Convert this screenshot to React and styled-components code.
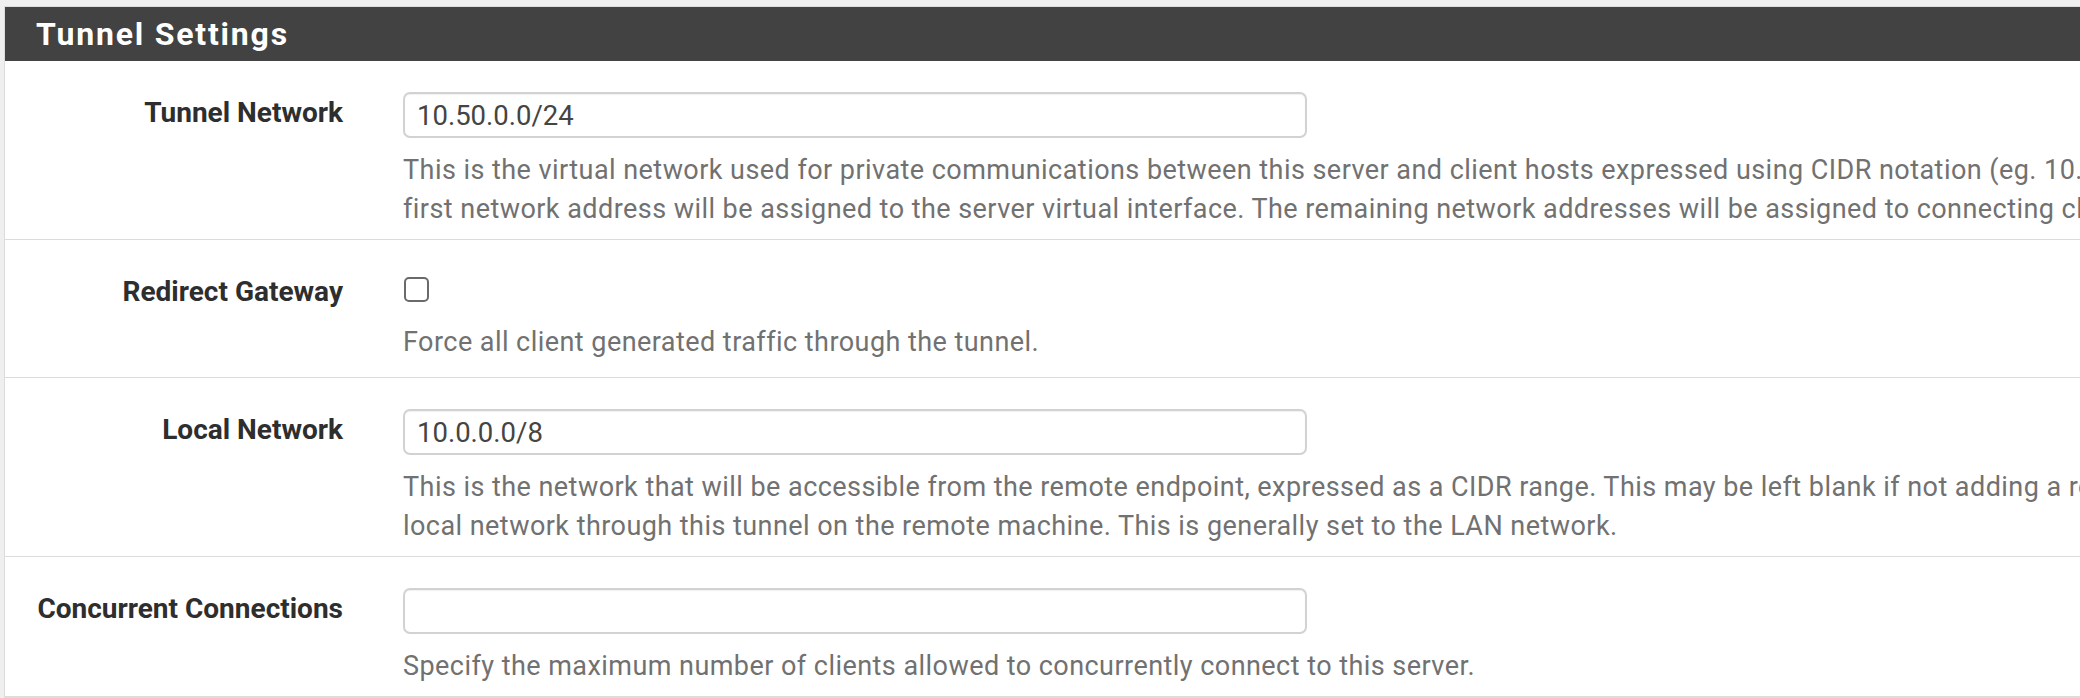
import React from "react";
import styled, { createGlobalStyle } from "styled-components";

const Global = createGlobalStyle`
  html, body {
    margin: 0;
    padding: 0;
    background: #efefef;
    overflow: hidden;
  }
  body {
    font-family: Roboto, "Liberation Sans", Arial, sans-serif;
  }
`;

const Page = styled.div`
  padding: 6px 0 0 4px;
  width: 2600px;
`;

const Panel = styled.section`
  background: #fff;
  border: 1px solid #dcdcdc;
  border-right: none;
`;

const Header = styled.h2`
  margin: 0;
  height: 54px;
  line-height: 54px;
  padding-left: 31px;
  background: #424242;
  color: #fff;
  font-size: 32px;
  font-weight: 700;
  letter-spacing: 1.8px;
`;

const Row = styled.div`
  display: flex;
  align-items: flex-start;
  padding: 31px 0 10px;
  border-bottom: 1px solid #dcdcdc;
`;

const Label = styled.label`
  flex: 0 0 338px;
  box-sizing: border-box;
  text-align: right;
  font-size: 28px;
  font-weight: 700;
  line-height: 42px;
  color: #2e2e2e;
  white-space: nowrap;
`;

const Content = styled.div`
  padding-left: 60px;
  display: flex;
  flex-direction: column;
`;

const Input = styled.input`
  box-sizing: border-box;
  width: 904px;
  height: 46px;
  padding: 0 12px;
  border: 2px solid #d2d2d2;
  border-radius: 7px;
  background: #fff;
  box-shadow: inset 0 1px 1px rgba(0, 0, 0, 0.06);
  font-family: Roboto, "Liberation Sans", Arial, sans-serif;
  font-size: 27.5px;
  letter-spacing: 0;
  color: #444;
  outline: none;
`;

const CheckWrap = styled.div`
  height: 39px;
  display: flex;
  align-items: flex-start;
  padding-top: 6px;
  box-sizing: border-box;
`;

const Check = styled.input`
  appearance: none;
  margin: 0 0 0 1px;
  width: 25px;
  height: 25px;
  box-sizing: border-box;
  border: 2px solid #6a6a6a;
  border-radius: 5px;
  background: #fff;
`;

const Help = styled.div`
  margin-top: 13px;
  margin-bottom: ${(p) => (p.$extra ? "5px" : "0")};
  font-size: 27px;
  letter-spacing: 0.45px;
  line-height: 39px;
  color: #717171;
`;

const Line = styled.span`
  display: block;
  white-space: nowrap;
`;

const rows = [
  {
    label: "Tunnel Network",
    value: "10.50.0.0/24",
    help: [
      "This is the virtual network used for private communications between this server and client hosts expressed using CIDR notation (eg. 10.0.8.0/24). The",
      "first network address will be assigned to the server virtual interface. The remaining network addresses will be assigned to connecting clients.",
    ],
  },
  {
    label: "Redirect Gateway",
    checkbox: true,
    help: ["Force all client generated traffic through the tunnel."],
  },
  {
    label: "Local Network",
    value: "10.0.0.0/8",
    help: [
      "This is the network that will be accessible from the remote endpoint, expressed as a CIDR range. This may be left blank if not adding a route to the",
      "local network through this tunnel on the remote machine. This is generally set to the LAN network.",
    ],
  },
  {
    label: "Concurrent Connections",
    value: "",
    help: ["Specify the maximum number of clients allowed to concurrently connect to this server."],
  },
];

export default function App() {
  return (
    <Page>
      <Global />
      <Panel>
        <Header>Tunnel Settings</Header>
        {rows.map((r) => (
          <Row key={r.label}>
            <Label>{r.label}</Label>
            <Content>
              {r.checkbox ? (
                <CheckWrap>
                  <Check type="checkbox" />
                </CheckWrap>
              ) : (
                <Input type="text" defaultValue={r.value} />
              )}
              <Help $extra={r.checkbox}>
                {r.help.map((l) => (
                  <Line key={l}>{l}</Line>
                ))}
              </Help>
            </Content>
          </Row>
        ))}
      </Panel>
    </Page>
  );
}
